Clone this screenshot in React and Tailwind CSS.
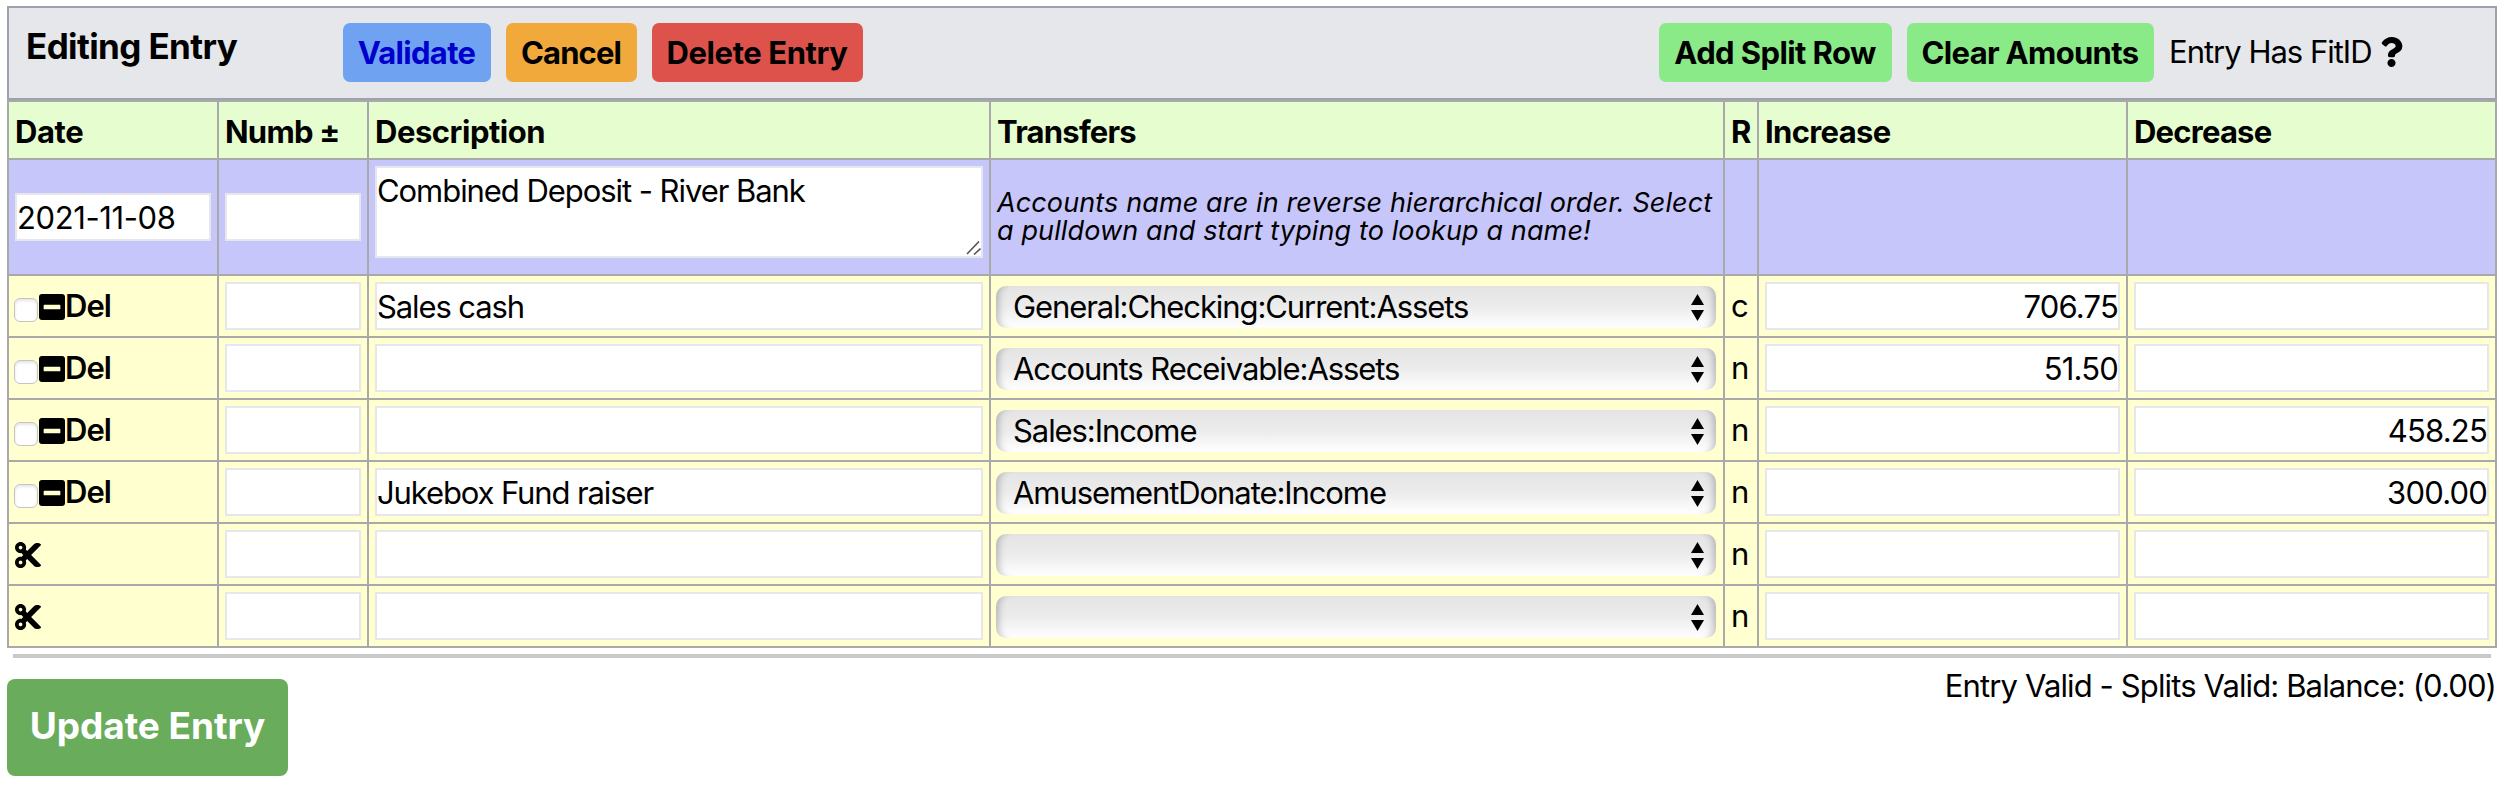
import { FaCut, FaQuestion, FaMinusSquare } from 'react-icons/fa';

const rows = [
  { del: true, desc: 'Sales cash', account: 'General:Checking:Current:Assets', r: 'c', inc: '706.75', dec: '' },
  { del: true, desc: '', account: 'Accounts Receivable:Assets', r: 'n', inc: '51.50', dec: '' },
  { del: true, desc: '', account: 'Sales:Income', r: 'n', inc: '', dec: '458.25' },
  { del: true, desc: 'Jukebox Fund raiser', account: 'AmusementDonate:Income', r: 'n', inc: '', dec: '300.00' },
  { del: false, desc: '', account: '', r: 'n', inc: '', dec: '' },
  { del: false, desc: '', account: '', r: 'n', inc: '', dec: '' },
];

const COLS = 'grid grid-cols-[208px_148px_620px_732px_32px_367px_367px] gap-0.5';

function Field({ value = '', className = '' }) {
  return (
    <input
      type="text"
      defaultValue={value}
      className={`block h-12 w-full min-w-0 border-2 border-[#e5e7eb] bg-white p-0 outline-none ${className}`}
    />
  );
}

function Cell({ className = '', children }) {
  return <div className={`flex items-center px-1.5 ${className}`}>{children}</div>;
}

function Button({ className, children }) {
  return (
    <button type="button" className={`h-[59px] shrink-0 rounded-[7px] pr-px text-center font-bold whitespace-nowrap ${className}`}>
      {children}
    </button>
  );
}

function AccountSelect({ value }) {
  return (
    <div className="mt-0.5 flex h-[42px] w-[720px] shrink-0 items-center justify-between rounded-[10px] bg-linear-to-b from-[#e4e4e4] via-[#ececec] to-white pr-3 pl-[17px] shadow-[inset_9px_0_7px_-6px_rgba(0,0,0,0.22),inset_-9px_0_7px_-6px_rgba(0,0,0,0.22)]">
      <span className="tracking-[-1.08px] whitespace-nowrap">{value}</span>
      <svg className="h-[27px] w-[13px]" viewBox="0 0 13 27">
        <path d="M6.5 0L13 11H0Z" />
        <path d="M6.5 27L13 16H0Z" />
      </svg>
    </div>
  );
}

function HeadCell({ className = '', children }) {
  return <div className={`bg-[#e6fecf] pt-1 pl-1.5 leading-[51px] font-bold whitespace-nowrap ${className}`}>{children}</div>;
}

export default function App() {
  return (
    <div className="h-[788px] w-[2504px] overflow-hidden bg-white px-[7px] pt-1.5 font-['Inter',sans-serif] text-[31px] leading-[38px] text-black">
      <header className="flex h-[94px] items-start border-2 border-[#9ca3af] bg-[#e5e7eb] pt-[15px]">
        <h1 className="-mt-[15px] w-[334px] pl-[17px] text-[35px] leading-[76px] font-bold tracking-[-0.61px]">Editing Entry</h1>
        <div className="flex gap-[15px]">
          <Button className="w-[148px] bg-[#6fa3f2] tracking-[-0.7px] text-[#0000cd]">Validate</Button>
          <Button className="w-[131px] bg-[#f1a93b] tracking-[-0.9px]">Cancel</Button>
          <Button className="w-[211px] bg-[#de524c] tracking-[-0.42px]">Delete Entry</Button>
        </div>
        <div className="ml-auto flex w-[836px] gap-[15px]">
          <Button className="w-[233px] bg-[#8bea88] tracking-[-0.6px]">Add Split Row</Button>
          <Button className="w-[247px] bg-[#8bea88] tracking-[-0.68px]">Clear Amounts</Button>
          <div className="flex items-start leading-[57px]">
            <span className="w-[211px] tracking-[-1px] whitespace-nowrap">Entry Has FitID</span>
            <FaQuestion className="mt-3.5 h-[30px] w-[23px]" />
          </div>
        </div>
      </header>

      <div className="bg-[#a9a9a9] p-0.5">
        <div className={`${COLS} h-14`}>
          <HeadCell className="tracking-[-0.38px]">Date</HeadCell>
          <HeadCell className="tracking-[-0.76px]">Numb ±</HeadCell>
          <HeadCell className="tracking-[-0.47px]">Description</HeadCell>
          <HeadCell className="tracking-[-0.78px]">Transfers</HeadCell>
          <HeadCell>R</HeadCell>
          <HeadCell className="tracking-[-0.65px]">Increase</HeadCell>
          <HeadCell className="tracking-[-0.77px]">Decrease</HeadCell>
        </div>

        <div className={`${COLS} mt-0.5 h-[114px]`}>
          <Cell className="bg-[#c7c6fb]">
            <Field value="2021-11-08" className="tracking-[-0.4px]" />
          </Cell>
          <Cell className="bg-[#c7c6fb]">
            <Field />
          </Cell>
          <Cell className="relative bg-[#c7c6fb] pt-1.5">
            <textarea
              defaultValue="Combined Deposit - River Bank"
              className="block h-[92px] w-full resize-none self-start border-2 border-[#e5e7eb] bg-white p-0 leading-[45px] tracking-[-1.06px] outline-none"
            />
            <svg className="absolute top-[81px] right-2 h-3.5 w-[15px] stroke-[#555]" viewBox="0 0 15 14" fill="none" strokeWidth="1.6">
              <path d="M1 13L13 0.5M8 13.5L14.5 7.5" />
            </svg>
          </Cell>
          <Cell className="bg-[#c7c6fb]">
            <div className="text-[27px] leading-7 tracking-[0.12px] whitespace-nowrap italic">
              <p>Accounts name are in reverse hierarchical order. Select</p>
              <p>a pulldown and start typing to lookup a name!</p>
            </div>
          </Cell>
          <Cell className="bg-[#c7c6fb]" />
          <Cell className="bg-[#c7c6fb]" />
          <Cell className="bg-[#c7c6fb]" />
        </div>

        {rows.map((row, i) => (
          <div key={i} className={`${COLS} mt-0.5 h-[60px]`}>
            <Cell className="bg-[#ffffd0]">
              {row.del ? (
                <label className="-ml-px flex items-center">
                  <span className="mt-2 h-6 w-6 rounded-[6px] border border-[#c4c4c4] bg-white shadow-[inset_0_2px_3px_rgba(0,0,0,0.1)]" />
                  <FaMinusSquare className="mt-0.5 ml-px h-[30px] w-[26px]" />
                  <span className="font-semibold tracking-[-1px]">Del</span>
                </label>
              ) : (
                <FaCut className="mt-0.5 h-[30px] w-[26px]" />
              )}
            </Cell>
            <Cell className="bg-[#ffffd0]">
              <Field />
            </Cell>
            <Cell className="bg-[#ffffd0]">
              <Field value={row.desc} className="tracking-[-1.12px]" />
            </Cell>
            <Cell className="bg-[#ffffd0] pr-1 pl-[5px]">
              <AccountSelect value={row.account} />
            </Cell>
            <Cell className="bg-[#ffffd0]">{row.r}</Cell>
            <Cell className="bg-[#ffffd0]">
              <Field value={row.inc} className="text-right tracking-[-0.8px]" />
            </Cell>
            <Cell className="bg-[#ffffd0]">
              <Field value={row.dec} className="text-right tracking-[-0.8px]" />
            </Cell>
          </div>
        ))}
      </div>

      <hr className="mx-1.5 mt-1.5 h-1 border-0 bg-[#c9c9c9]" />

      <footer className="flex items-start justify-between">
        <button type="button" className="mt-[21px] h-[97px] w-[281px] rounded-[8px] bg-[#69ad5c] pb-1 text-[37px] font-bold tracking-[-0.06px] text-white">
          Update Entry
        </button>
        <p className="mt-[9px] pr-px tracking-[-0.88px] whitespace-nowrap">Entry Valid - Splits Valid: Balance: (0.00)</p>
      </footer>
    </div>
  );
}
